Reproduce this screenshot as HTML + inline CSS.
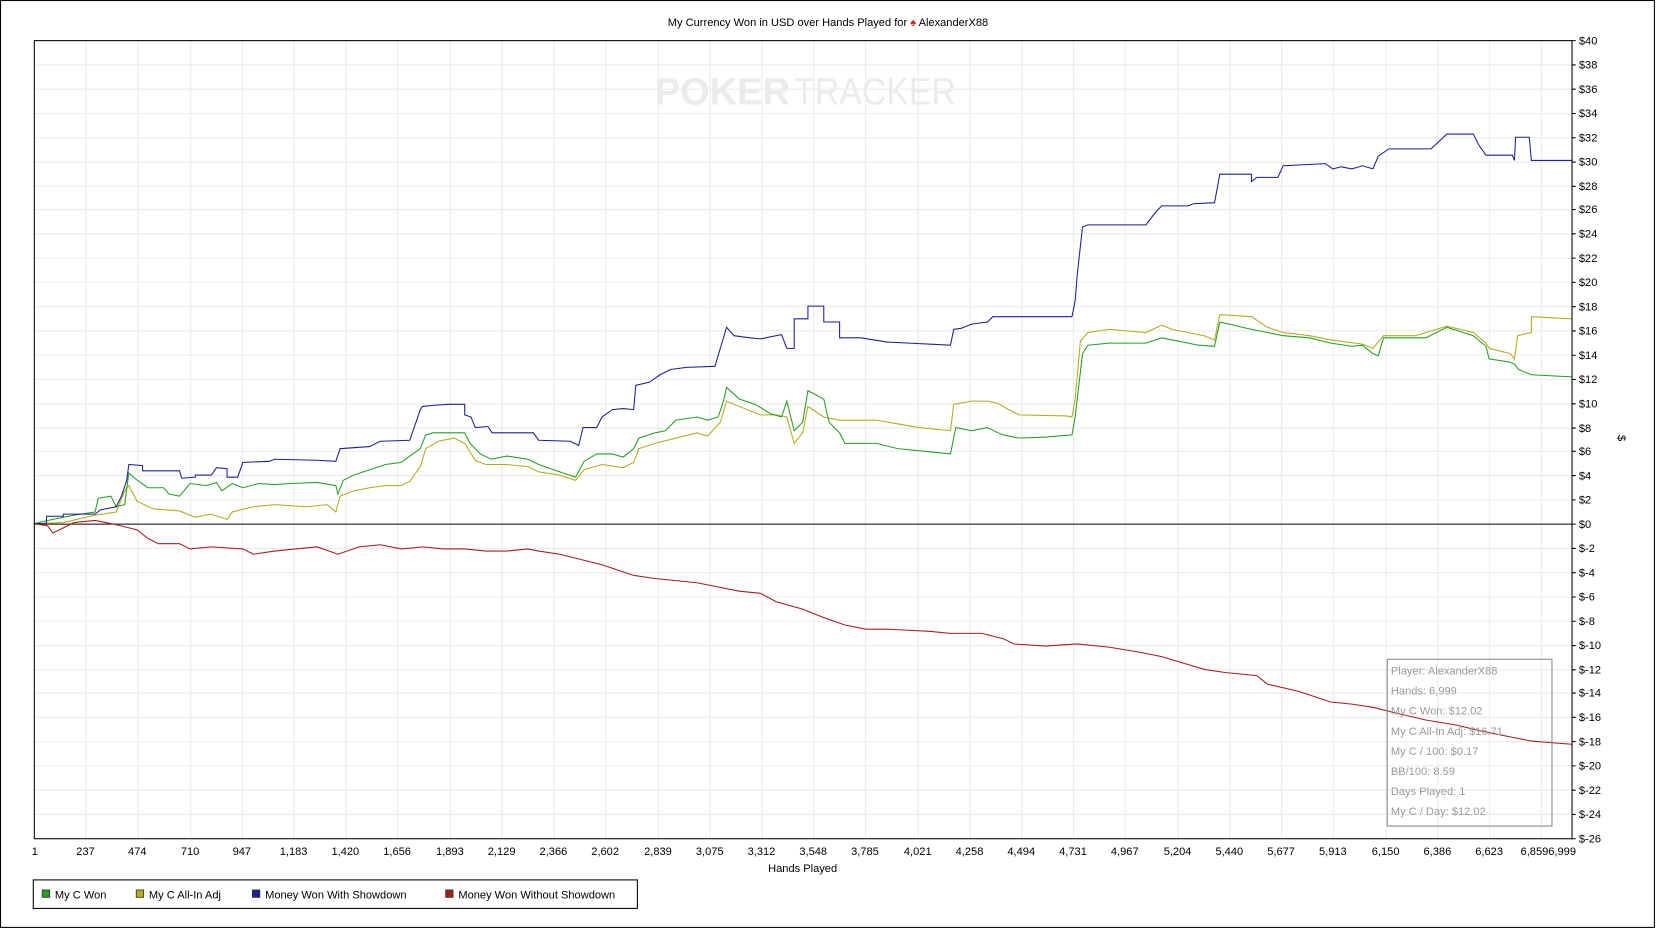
<!DOCTYPE html>
<html><head><meta charset="utf-8"><style>
html,body{margin:0;padding:0;background:#fff;}
svg{display:block;}
text{font-family:"Liberation Sans",sans-serif;}
</style></head><body>
<svg width="1656" height="929" viewBox="0 0 1568 880" xmlns="http://www.w3.org/2000/svg" preserveAspectRatio="none">
<rect x="0.5" y="0.5" width="1566" height="878" fill="#fff" stroke="#000" stroke-width="1"/>
<text x="784" y="24.5" font-size="10.5" text-anchor="middle" fill="#000">My Currency Won in USD over Hands Played for <tspan fill="#d02020">♠</tspan> AlexanderX88</text>
<g stroke="#ebebeb" stroke-width="1">
<path d="M32 61.5H1488M32 84.5H1488M32 107.5H1488M32 130.5H1488M32 153.5H1488M32 176.5H1488M32 198.5H1488M32 221.5H1488M32 244.5H1488M32 267.5H1488M32 290.5H1488M32 313.5H1488M32 336.5H1488M32 359.5H1488M32 382.5H1488M32 405.5H1488M32 427.5H1488M32 450.5H1488M32 473.5H1488M32 519.5H1488M32 542.5H1488M32 565.5H1488M32 588.5H1488M32 611.5H1488M32 634.5H1488M32 656.5H1488M32 679.5H1488M32 702.5H1488M32 725.5H1488M32 748.5H1488M32 771.5H1488"/>
<path d="M81.5 38V794M130.5 38V794M180.5 38V794M229.5 38V794M278.5 38V794M327.5 38V794M376.5 38V794M426.5 38V794M475.5 38V794M524.5 38V794M573.5 38V794M623.5 38V794M672.5 38V794M721.5 38V794M770.5 38V794M819.5 38V794M869.5 38V794M918.5 38V794M967.5 38V794M1016.5 38V794M1065.5 38V794M1115.5 38V794M1164.5 38V794M1213.5 38V794M1262.5 38V794M1312.5 38V794M1361.5 38V794M1410.5 38V794M1459.5 38V794"/>
</g>
<text x="620" y="99" font-size="36" font-weight="bold" fill="#ebebeb" textLength="128" lengthAdjust="spacingAndGlyphs">POKER</text>
<text x="752" y="99" font-size="36" fill="#ebebeb" textLength="153" lengthAdjust="spacingAndGlyphs">TRACKER</text>
<line x1="32" y1="496.5" x2="1488" y2="496.5" stroke="#000" stroke-width="1"/>
<polyline fill="none" stroke="#a81c1c" stroke-width="1" points="32,496 45,498 50,505 60,500 70,495 90,493 110,497 130,502 140,510 150,515 170,515 180,520 200,518 230,520 240,525 260,522 280,520 300,518 320,525 340,518 360,516 380,520 400,518 420,520 440,520 460,522 480,522 500,520 510,522 530,525 550,530 570,535 585,540 600,545 620,548 640,550 660,552 680,556 700,560 720,562 735,570 760,577 780,585 800,592 820,596 840,596 860,597 880,598 900,600 930,600 950,605 960,610 990,612 1020,610 1050,613 1080,618 1100,622 1120,628 1140,634 1160,637 1190,640 1200,648 1230,655 1260,665 1280,667 1300,670 1320,675 1350,682 1380,687 1400,692 1430,698 1450,702 1488,705"/>
<polyline fill="none" stroke="#b4aa1e" stroke-width="1" points="32,496 60,495 90,488 110,485 118,465 122,460 130,475 145,482 170,484 185,490 200,487 215,492 220,485 240,480 260,478 290,480 310,478 318,485 322,470 335,465 350,462 365,460 380,460 388,456 398,442 403,425 415,418 430,415 440,420 450,436 460,440 480,440 500,442 510,447 530,450 545,455 553,445 570,440 590,443 600,438 605,425 620,420 640,415 660,410 670,413 682,400 688,380 700,385 720,393 735,393 745,395 752,420 760,410 765,385 780,395 795,398 830,398 870,405 900,408 903,383 920,380 935,380 945,382 955,388 965,393 1010,394 1015,395 1018,378 1023,323 1030,315 1050,312 1085,315 1100,308 1110,312 1140,318 1150,322 1155,298 1185,300 1200,310 1215,315 1240,318 1260,322 1290,326 1300,330 1310,318 1340,318 1370,309 1395,315 1407,325 1410,330 1430,335 1434,340 1437,318 1450,315 1450,300 1488,302"/>
<polyline fill="none" stroke="#22a022" stroke-width="1" points="32,496 50,492 70,488 90,485 93,472 105,470 110,480 118,478 122,448 130,455 140,462 155,462 160,468 170,470 180,458 195,460 205,457 210,465 220,458 230,462 245,458 260,459 275,458 300,457 318,460 320,468 325,455 335,450 350,445 365,440 380,438 388,432 398,425 403,412 410,410 425,410 440,410 445,420 455,430 465,435 480,432 500,435 510,440 530,447 545,452 553,437 565,430 580,430 590,433 600,425 605,415 620,410 630,408 640,398 660,395 670,398 680,395 685,380 688,367 700,378 715,383 730,392 740,395 745,380 752,408 760,400 765,370 780,378 785,400 795,410 800,420 830,420 850,425 880,428 900,430 905,405 920,408 935,405 945,410 950,412 965,415 990,414 1015,412 1018,395 1025,335 1030,327 1050,325 1085,325 1100,320 1110,322 1135,327 1150,328 1155,305 1185,312 1200,315 1215,318 1240,320 1260,325 1280,328 1290,327 1300,335 1305,337 1310,320 1340,320 1350,320 1370,310 1395,318 1407,328 1410,340 1430,343 1434,345 1438,350 1450,355 1488,357"/>
<polyline fill="none" stroke="#1e1e9a" stroke-width="1" points="32,496 44,496 44,489 60,489 60,487 90,487 95,483 110,480 115,470 120,455 122,440 135,441 135,446 170,446 172,453 185,452 185,450 200,450 205,443 215,444 215,452 225,452 230,438 255,437 260,435 300,436 318,437 322,425 350,423 360,418 388,417 398,388 400,385 410,384 425,383 440,383 440,393 446,395 450,405 462,404 466,410 505,410 510,417 540,418 548,422 552,405 565,405 570,395 580,388 590,387 600,388 602,365 615,362 625,355 635,350 650,348 677,347 682,330 688,310 695,318 710,320 720,321 740,317 745,330 752,330 752,302 765,302 765,290 780,290 780,305 795,305 795,320 815,320 840,324 900,327 903,312 910,311 920,307 935,305 940,300 1015,300 1018,285 1020,260 1025,215 1030,213 1085,213 1095,200 1100,195 1125,195 1130,193 1150,192 1155,165 1185,165 1185,172 1190,168 1210,168 1215,157 1255,155 1262,160 1270,158 1280,160 1290,157 1300,160 1305,148 1315,141 1355,141 1370,127 1395,127 1400,137 1407,147 1432,147 1434,152 1435,130 1448,130 1450,152 1488,152"/>
<rect x="32.5" y="38.5" width="1456" height="756" fill="none" stroke="#000" stroke-width="1"/>
<g font-size="10.5" fill="#000">
<g text-anchor="start">
<text x="1495" y="42">$40</text><text x="1495" y="65">$38</text><text x="1495" y="88">$36</text><text x="1495" y="111">$34</text><text x="1495" y="134">$32</text><text x="1495" y="157">$30</text><text x="1495" y="180">$28</text><text x="1495" y="202">$26</text><text x="1495" y="225">$24</text><text x="1495" y="248">$22</text><text x="1495" y="271">$20</text><text x="1495" y="294">$18</text><text x="1495" y="317">$16</text><text x="1495" y="340">$14</text><text x="1495" y="363">$12</text><text x="1495" y="386">$10</text><text x="1495" y="409">$8</text><text x="1495" y="431">$6</text><text x="1495" y="454">$4</text><text x="1495" y="477">$2</text><text x="1495" y="500">$0</text><text x="1495" y="523">$-2</text><text x="1495" y="546">$-4</text><text x="1495" y="569">$-6</text><text x="1495" y="592">$-8</text><text x="1495" y="615">$-10</text><text x="1495" y="638">$-12</text><text x="1495" y="660">$-14</text><text x="1495" y="683">$-16</text><text x="1495" y="706">$-18</text><text x="1495" y="729">$-20</text><text x="1495" y="752">$-22</text><text x="1495" y="775">$-24</text><text x="1495" y="798">$-26</text>
</g>
<text x="1532" y="415" transform="rotate(90 1532 415)" text-anchor="middle">$</text>
<g text-anchor="middle">
<text x="33" y="810">1</text><text x="81" y="810">237</text><text x="130" y="810">474</text><text x="180" y="810">710</text><text x="229" y="810">947</text><text x="278" y="810">1,183</text><text x="327" y="810">1,420</text><text x="376" y="810">1,656</text><text x="426" y="810">1,893</text><text x="475" y="810">2,129</text><text x="524" y="810">2,366</text><text x="573" y="810">2,602</text><text x="623" y="810">2,839</text><text x="672" y="810">3,075</text><text x="721" y="810">3,312</text><text x="770" y="810">3,548</text><text x="819" y="810">3,785</text><text x="869" y="810">4,021</text><text x="918" y="810">4,258</text><text x="967" y="810">4,494</text><text x="1016" y="810">4,731</text><text x="1065" y="810">4,967</text><text x="1115" y="810">5,204</text><text x="1164" y="810">5,440</text><text x="1213" y="810">5,677</text><text x="1262" y="810">5,913</text><text x="1312" y="810">6,150</text><text x="1361" y="810">6,386</text><text x="1410" y="810">6,623</text><text x="1466" y="810">6,8596,999</text>
<text x="760" y="826">Hands Played</text>
</g>
</g>
<g stroke="#000"><path d="M1488 38.5h4M1488 61.5h4M1488 84.5h4M1488 107.5h4M1488 130.5h4M1488 153.5h4M1488 176.5h4M1488 198.5h4M1488 221.5h4M1488 244.5h4M1488 267.5h4M1488 290.5h4M1488 313.5h4M1488 336.5h4M1488 359.5h4M1488 382.5h4M1488 405.5h4M1488 427.5h4M1488 450.5h4M1488 473.5h4M1488 496.5h4M1488 519.5h4M1488 542.5h4M1488 565.5h4M1488 588.5h4M1488 611.5h4M1488 634.5h4M1488 656.5h4M1488 679.5h4M1488 702.5h4M1488 725.5h4M1488 748.5h4M1488 771.5h4M1488 794.5h4"/></g>
<rect x="1313.5" y="624.5" width="156" height="158" fill="none" stroke="#888" stroke-width="1"/>
<g font-size="10.5" fill="#9a9a9a">
<text x="1317" y="639">Player: AlexanderX88</text>
<text x="1317" y="658">Hands: 6,999</text>
<text x="1317" y="677">My C Won: $12.02</text>
<text x="1317" y="696">My C All-In Adj: $16.71</text>
<text x="1317" y="715">My C / 100: $0.17</text>
<text x="1317" y="734">BB/100: 8.59</text>
<text x="1317" y="753">Days Played: 1</text>
<text x="1317" y="772">My C / Day: $12.02</text>
</g>
<rect x="31.5" y="833.5" width="572" height="27" fill="#fff" stroke="#000" stroke-width="1"/>
<g stroke="#333" stroke-width="0.8">
<rect x="40" y="843" width="7" height="7" fill="#22a022"/>
<rect x="129" y="843" width="7" height="7" fill="#b4aa1e"/>
<rect x="239" y="843" width="7" height="7" fill="#1e1e9a"/>
<rect x="422" y="843" width="7" height="7" fill="#a81c1c"/>
</g>
<g font-size="10.5" fill="#000">
<text x="52" y="851">My C Won</text>
<text x="141" y="851">My C All-In Adj</text>
<text x="251" y="851">Money Won With Showdown</text>
<text x="434" y="851">Money Won Without Showdown</text>
</g>
</svg>
</body></html>
